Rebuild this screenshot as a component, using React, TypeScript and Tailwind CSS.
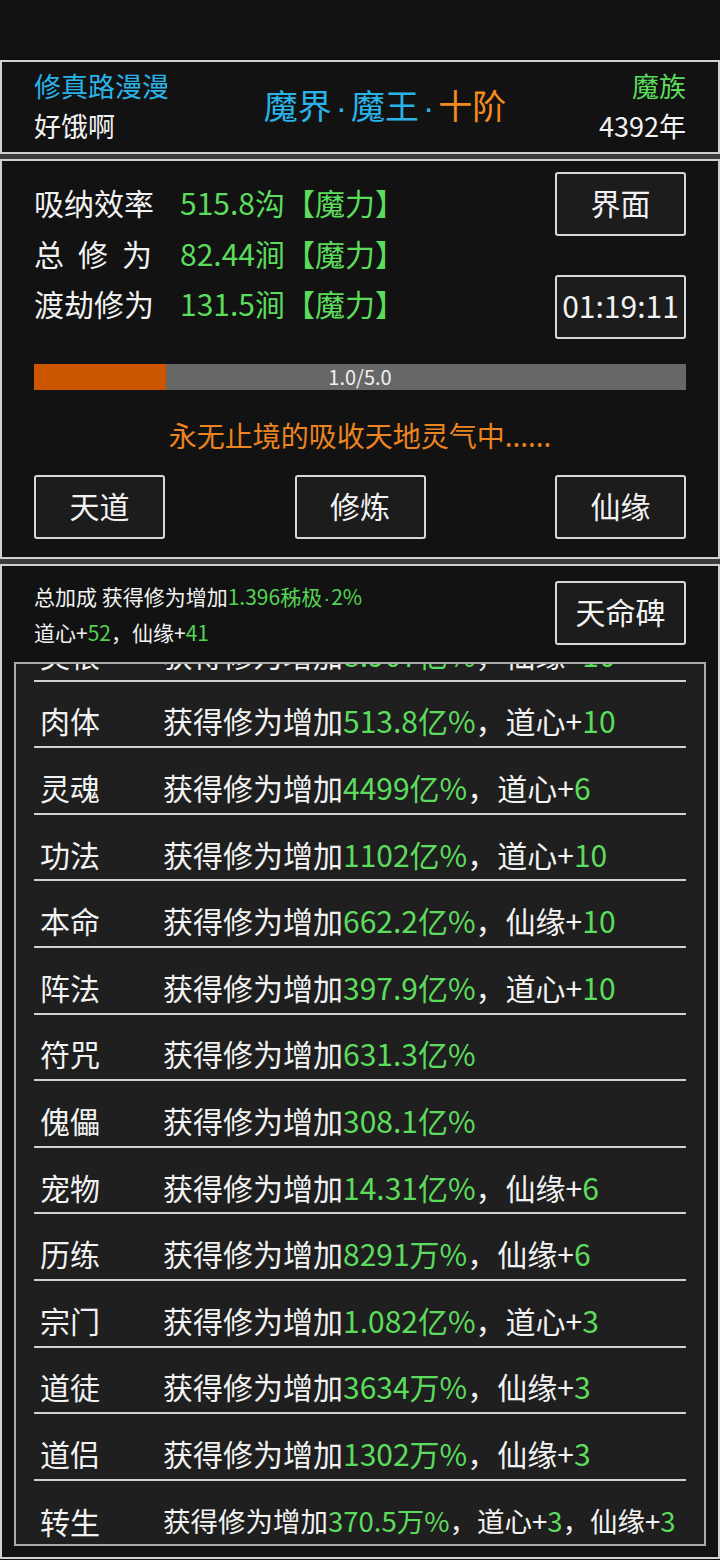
import React from "react";

const green = "text-[#5cdc5c]";

interface BonusRow {
  name: string;
  value: string;
  extra?: { label: string; value: string }[];
}

const rows: BonusRow[] = [
  { name: "灵根", value: "8.907亿%", extra: [{ label: "仙缘+", value: "10" }] },
  { name: "肉体", value: "513.8亿%", extra: [{ label: "道心+", value: "10" }] },
  { name: "灵魂", value: "4499亿%", extra: [{ label: "道心+", value: "6" }] },
  { name: "功法", value: "1102亿%", extra: [{ label: "道心+", value: "10" }] },
  { name: "本命", value: "662.2亿%", extra: [{ label: "仙缘+", value: "10" }] },
  { name: "阵法", value: "397.9亿%", extra: [{ label: "道心+", value: "10" }] },
  { name: "符咒", value: "631.3亿%" },
  { name: "傀儡", value: "308.1亿%" },
  { name: "宠物", value: "14.31亿%", extra: [{ label: "仙缘+", value: "6" }] },
  { name: "历练", value: "8291万%", extra: [{ label: "仙缘+", value: "6" }] },
  { name: "宗门", value: "1.082亿%", extra: [{ label: "道心+", value: "3" }] },
  { name: "道徒", value: "3634万%", extra: [{ label: "仙缘+", value: "3" }] },
  { name: "道侣", value: "1302万%", extra: [{ label: "仙缘+", value: "3" }] },
  {
    name: "转生",
    value: "370.5万%",
    extra: [
      { label: "道心+", value: "3" },
      { label: "仙缘+", value: "3" },
    ],
  },
];

// narrow middle dot, the CJK font draws it full width
function Dot({ className = "" }: { className?: string }) {
  return <span className={`font-['Liberation_Sans'] ${className}`}>·</span>;
}

function GameButton({ children, className = "" }: { children: React.ReactNode; className?: string }) {
  return (
    <button
      className={`w-[131px] h-[64px] flex items-center justify-center pb-[5px] bg-[#1c1c1c] border-2 border-[#d8d8d8] rounded-[3px] text-[#f2f2f2] text-[30px] leading-none ${className}`}
    >
      {children}
    </button>
  );
}

export default function App() {
  return (
    <div
      className="w-[720px] h-[1560px] bg-[#111111] flex flex-col overflow-hidden text-[#f2f2f2]"
      style={{ fontFamily: '"Noto Sans CJK SC", "Noto Sans", sans-serif' }}
    >
      <div className="h-[60px] shrink-0" />

      {/* Header */}
      <div className="h-[94px] shrink-0 border-2 border-[#d0d0d0] bg-[#121212] flex items-center justify-between px-[32px]">
        <div className="flex flex-col text-[27px] leading-[40px]">
          <span className="text-[#2ab3e6] -mt-[3px]">修真路漫漫</span>
          <span>好饿啊</span>
        </div>
        <div className="text-[34px] leading-none pl-[2px] pb-[2px]">
          <span className="text-[#2ab3e6]">
            魔界<Dot className="mx-[4px]" />魔王<Dot className="mx-[4px]" />
          </span>
          <span className="text-[#f28a1e]">十阶</span>
        </div>
        <div className="flex flex-col items-end text-[27px] leading-[40px]">
          <span className="text-[#5cdc5c] -mt-[3px]">魔族</span>
          <span>4392年</span>
        </div>
      </div>

      <div className="h-[5px] shrink-0 bg-[#3c3c3c]" />

      {/* Cultivation panel */}
      <div className="h-[400px] shrink-0 border-2 border-[#d0d0d0] bg-[#121212] flex flex-col px-[32px]">
        <div className="flex justify-between">
          <div className="flex flex-col pt-[15px] text-[30px]">
            <div className="h-[52px] flex items-center">
              <span className="w-[146px]">吸纳效率</span>
              <span className={green}>515.8沟【魔力】</span>
            </div>
            <div className="h-[50px] flex items-center">
              <span className="w-[146px] flex">
                <span className="w-[118px] flex justify-between">
                  <span>总</span>
                  <span>修</span>
                  <span>为</span>
                </span>
              </span>
              <span className={green}>82.44涧【魔力】</span>
            </div>
            <div className="h-[50px] flex items-center">
              <span className="w-[146px]">渡劫修为</span>
              <span className={green}>131.5涧【魔力】</span>
            </div>
          </div>
          <div className="flex flex-col pt-[11px] gap-[39px]">
            <GameButton>界面</GameButton>
            <GameButton>01:19:11</GameButton>
          </div>
        </div>

        <div className="mt-[25px] h-[26px] bg-[#676767] relative flex">
          <div className="w-[132px] h-full bg-[#cc5500]" />
          <span className="absolute inset-0 flex items-center justify-center text-[20px] leading-none">1.0/5.0</span>
        </div>

        <div className="mt-[25px] h-[40px] flex items-center justify-center text-[28px] text-[#ec8420]">
          永无止境的吸收天地灵气中......
        </div>

        <div className="mt-[20px] flex justify-between">
          <GameButton>天道</GameButton>
          <GameButton>修炼</GameButton>
          <GameButton>仙缘</GameButton>
        </div>
      </div>

      <div className="h-[5px] shrink-0 bg-[#3c3c3c]" />

      {/* Bonus panel */}
      <div className="h-[995px] shrink-0 border-2 border-[#d0d0d0] bg-[#121212] flex flex-col">
        <div className="flex justify-between px-[32px]">
          <div className="flex flex-col pt-[13px] text-[21px] leading-[34px]">
            <div>
              总加成 获得修为增加
              <span className="text-[#52d452]">
                1.396秭极<Dot className="mx-[1px]" />2%
              </span>
            </div>
            <div>
              道心+<span className="text-[#52d452]">52</span>，仙缘+<span className="text-[#52d452]">41</span>
            </div>
          </div>
          <div className="pt-[15px]">
            <GameButton>天命碑</GameButton>
          </div>
        </div>

        <div className="mt-[13px] mx-[12px] h-[884px] border-2 border-[#ababab] bg-[#1f1f1f] overflow-hidden">
          <div className="px-[18px] mt-[-49px]">
            {rows.map((row, i) => {
              const last = i === rows.length - 1;
              return (
                <div
                  key={row.name}
                  className={`h-[66.6px] flex items-center pt-[14px] text-[30px] whitespace-nowrap ${
                    last ? "" : "border-b-2 border-[#d2d2d2]"
                  }`}
                >
                  <span className="w-[129px] shrink-0 pl-[6px]">{row.name}</span>
                  <span className={last ? "text-[27.5px]" : ""}>
                    获得修为增加<span className={green}>{row.value}</span>
                    {row.extra?.map((e) => (
                      <React.Fragment key={e.label}>
                        ，{e.label}
                        <span className={green}>{e.value}</span>
                      </React.Fragment>
                    ))}
                  </span>
                </div>
              );
            })}
          </div>
        </div>
      </div>
    </div>
  );
}
